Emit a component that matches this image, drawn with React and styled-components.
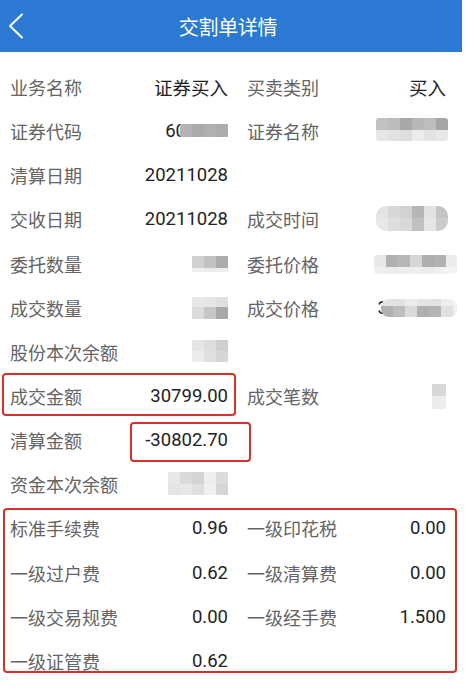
import React from "react";
import styled, { createGlobalStyle, css } from "styled-components";

const Global = createGlobalStyle`
  html, body { margin: 0; padding: 0; background: #ffffff; }
  body { font-family: "Noto Sans", "Noto Sans CJK SC", sans-serif; }
  * { box-sizing: border-box; }
`;

const Page = styled.div`
  width: 466px;
  min-height: 688px;
  background: #ffffff;
`;

const Header = styled.header`
  width: 462px;
  height: 52px;
  background: #2b79d3;
  display: grid;
  grid-template-columns: 34px 1fr 40px;
  align-items: center;
`;

const Back = styled.div`
  padding-left: 8px;
  display: flex;
  align-items: center;
`;

const Title = styled.h1`
  margin: 0;
  text-align: center;
  color: #ffffff;
  font-size: 20px;
  font-weight: 400;
  font-family: "Noto Sans CJK SC", sans-serif;
  letter-spacing: -0.3px;
`;

const List = styled.div`
  padding-top: 13px;
`;

const Section = styled.div`
  position: relative;
  ${(p) =>
    p.$boxed &&
    css`
      &::after {
        content: "";
        position: absolute;
        top: 2px;
        bottom: 10px;
        left: 3px;
        right: 9px;
        border: 2px solid #d8302b;
        border-radius: 4px;
        pointer-events: none;
      }
    `}
`;

const Row = styled.div`
  display: grid;
  grid-template-columns: 218px 199px;
  column-gap: 19px;
  height: 44.15px;
  padding: 0 20px 0 10px;
`;

const Pair = styled.div`
  position: relative;
  display: flex;
  justify-content: space-between;
  align-items: center;
  height: 100%;
  ${(p) =>
    p.$boxed &&
    css`
      &::after {
        content: "";
        position: absolute;
        top: -1px;
        bottom: 2px;
        left: -8px;
        right: -8px;
        border: 2px solid #d8302b;
        border-radius: 4px;
        pointer-events: none;
      }
    `}
`;

const Label = styled.span`
  font-family: "Noto Sans CJK SC", sans-serif;
  font-size: 18px;
  color: #646464;
  white-space: nowrap;
`;

const Value = styled.span`
  position: relative;
  align-self: stretch;
  display: flex;
  align-items: center;
  justify-content: flex-end;
  font-family: Roboto, "Noto Sans CJK SC", sans-serif;
  font-size: 18.5px;
  color: #222222;
  white-space: nowrap;
  ${(p) =>
    p.$boxed &&
    css`
      &::after {
        content: "";
        position: absolute;
        top: 4px;
        bottom: 0;
        left: -15px;
        right: -23px;
        border: 2px solid #d8302b;
        border-radius: 4px;
        pointer-events: none;
      }
    `}
`;

const MosaicGrid = styled.span`
  display: grid;
  grid-template-columns: ${(p) => p.$cols};
  grid-template-rows: ${(p) => p.$rows};
  margin-left: ${(p) => p.$ml || 0}px;
  margin-right: ${(p) => p.$mr || 0}px;
  margin-top: ${(p) => p.$mt || 0}px;
  border-radius: ${(p) => p.$radius || 1}px;
  overflow: hidden;
  filter: blur(0.6px);
`;

const Cell = styled.span`
  display: block;
`;

function Mosaic({ widths, heights, shades, ml, mr, mt, radius }) {
  return (
    <MosaicGrid
      $cols={widths.map((w) => w + "px").join(" ")}
      $rows={heights.map((h) => h + "px").join(" ")}
      $ml={ml}
      $mr={mr}
      $mt={mt}
      $radius={radius}
    >
      {shades.flat().map((c, i) => (
        <Cell key={i} style={{ background: c }} />
      ))}
    </MosaicGrid>
  );
}

const Chevron = () => (
  <svg width="16" height="26" viewBox="0 0 16 26" fill="none">
    <path d="M14 1.5 L2 13 L14 24.5" stroke="#ffffff" strokeWidth="2" strokeLinecap="round" strokeLinejoin="round" />
  </svg>
);

const rows = [
  [{ l: "业务名称", v: "证券买入" }, { l: "买卖类别", v: "买入" }],
  [
    {
      l: "证券代码",
      v: (
        <>
          60
          <Mosaic widths={[12, 12, 12, 12]} heights={[13]} ml={-6} mt={-2}
            shades={[["#b4b4b4", "#aaaaaa", "#b0b0b0", "#acacac"]]} />
        </>
      ),
    },
    {
      l: "证券名称",
      v: (
        <Mosaic widths={[12, 12, 12, 12, 12, 12]} heights={[12, 11]} mr={-2} mt={-3} radius={3}
          shades={[
            ["#c2c2c2", "#bcbcbc", "#a8a8a8", "#b8b8b8", "#bdbdbd", "#a6a6a6"],
            ["#e6e6e6", "#e2e2e2", "#dedede", "#ececec", "#e4e4e4", "#e8e8e8"],
          ]} />
      ),
    },
  ],
  [{ l: "清算日期", v: "20211028" }, null],
  [
    { l: "交收日期", v: "20211028" },
    {
      l: "成交时间",
      v: (
        <Mosaic widths={[12, 12, 12, 12, 12, 12]} heights={[12, 13]} mr={-2} mt={-2} radius={10}
          shades={[
            ["#e4e4e4", "#d8d8d8", "#d2d2d2", "#b6b6b6", "#e2e2e2", "#c4c4c4"],
            ["#e8e8e8", "#dedede", "#d8d8d8", "#c0c0c0", "#e6e6e6", "#cccccc"],
          ]} />
      ),
    },
  ],
  [
    {
      l: "委托数量",
      v: (
        <Mosaic widths={[12, 12, 12]} heights={[12, 4]}
          shades={[["#d0d0d0", "#c2c2c2", "#acacac"], ["#eeeeee", "#ebebeb", "#efefef"]]} />
      ),
    },
    {
      l: "委托价格",
      v: (
        <Mosaic widths={[12, 12, 12, 12, 12, 12, 11]} heights={[12, 7]} mr={-11} mt={2} radius={3}
          shades={[
            ["#e8e8e8", "#b0b0b0", "#b8b8b8", "#d6d6d6", "#afafaf", "#b2b2b2", "#ececec"],
            ["#f0f0f0", "#ececec", "#eeeeee", "#efefef", "#ececec", "#f0f0f0", "#f4f4f4"],
          ]} />
      ),
    },
  ],
  [
    {
      l: "成交数量",
      v: (
        <Mosaic widths={[12, 12, 12]} heights={[10, 12]}
          shades={[["#e8e8e8", "#e6e6e6", "#e0e0e0"], ["#dcdcdc", "#c6c6c6", "#a8a8a8"]]} />
      ),
    },
    {
      l: "成交价格",
      v: (
        <>
          3
          <Mosaic widths={[12, 12, 12, 12, 12, 12, 4]} heights={[7, 11]} ml={-7} mr={-11} radius={8}
            shades={[
              ["#e4e4e4", "#e2e2e2", "#ececec", "#e4e4e4", "#e2e2e2", "#eeeeee", "#f2f2f2"],
              ["#b0b0b0", "#bdbdbd", "#dadada", "#b0b0b0", "#b5b5b5", "#e0e0e0", "#eeeeee"],
            ]} />
        </>
      ),
    },
  ],
  [
    {
      l: "股份本次余额",
      v: (
        <Mosaic widths={[12, 12, 12]} heights={[11, 11]} mt={-2}
          shades={[["#e5e5e5", "#dcdcdc", "#cfcfcf"], ["#ececec", "#e0e0e0", "#d6d6d6"]]} />
      ),
    },
    null,
  ],
  [
    { l: "成交金额", v: "30799.00", boxed: true },
    {
      l: "成交笔数",
      v: <Mosaic widths={[14]} heights={[12, 13]} shades={[["#d8d8d8"], ["#ededed"]]} />,
    },
  ],
  [{ l: "清算金额", v: "-30802.70", vboxed: true }, null],
  [
    {
      l: "资金本次余额",
      v: (
        <Mosaic widths={[12, 12, 12, 12, 12]} heights={[12, 11]} mt={-1}
          shades={[
            ["#e8e8e8", "#dadada", "#d4d4d4", "#eeeeee", "#dcdcdc"],
            ["#e4e4e4", "#e8e8e8", "#e0e0e0", "#f0f0f0", "#d6d6d6"],
          ]} />
      ),
    },
    null,
  ],
];

const feeRows = [
  [{ l: "标准手续费", v: "0.96" }, { l: "一级印花税", v: "0.00" }],
  [{ l: "一级过户费", v: "0.62" }, { l: "一级清算费", v: "0.00" }],
  [{ l: "一级交易规费", v: "0.00" }, { l: "一级经手费", v: "1.500" }],
  [{ l: "一级证管费", v: "0.62" }, null],
];

function Item({ item }) {
  if (!item) return <Pair />;
  return (
    <Pair $boxed={item.boxed}>
      <Label>{item.l}</Label>
      <Value $boxed={item.vboxed}>{item.v}</Value>
    </Pair>
  );
}

function Rows({ data }) {
  return data.map((r, i) => (
    <Row key={i}>
      <Item item={r[0]} />
      <Item item={r[1]} />
    </Row>
  ));
}

export default function App() {
  return (
    <Page>
      <Global />
      <Header>
        <Back>
          <Chevron />
        </Back>
        <Title>交割单详情</Title>
        <span />
      </Header>
      <List>
        <Rows data={rows} />
        <Section $boxed>
          <Rows data={feeRows} />
        </Section>
      </List>
    </Page>
  );
}
